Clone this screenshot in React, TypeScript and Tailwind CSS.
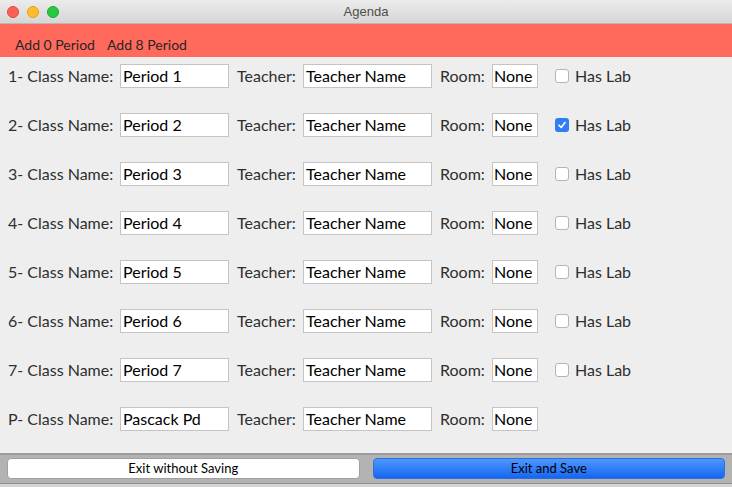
import { useState } from 'react';

type Period = {
  id: string;
  name: string;
  teacher: string;
  room: string;
  hasLab?: boolean;
};

const initialPeriods: Period[] = [
  { id: '1', name: 'Period 1', teacher: 'Teacher Name', room: 'None', hasLab: false },
  { id: '2', name: 'Period 2', teacher: 'Teacher Name', room: 'None', hasLab: true },
  { id: '3', name: 'Period 3', teacher: 'Teacher Name', room: 'None', hasLab: false },
  { id: '4', name: 'Period 4', teacher: 'Teacher Name', room: 'None', hasLab: false },
  { id: '5', name: 'Period 5', teacher: 'Teacher Name', room: 'None', hasLab: false },
  { id: '6', name: 'Period 6', teacher: 'Teacher Name', room: 'None', hasLab: false },
  { id: '7', name: 'Period 7', teacher: 'Teacher Name', room: 'None', hasLab: false },
  { id: 'P', name: 'Pascack Pd', teacher: 'Teacher Name', room: 'None' },
];

export default function App() {
  const [periods, setPeriods] = useState<Period[]>(initialPeriods);

  const update = (i: number, patch: Partial<Period>) => {
    setPeriods((prev) => prev.map((p, idx) => (idx === i ? { ...p, ...patch } : p)));
  };

  return (
    <div className="w-[732px] h-[487px] flex flex-col bg-[#eeeeee] font-['Lato',sans-serif] overflow-hidden">
      {/* Title bar */}
      <div className="relative h-[24px] shrink-0 flex items-center justify-center bg-gradient-to-b from-[#ececec] to-[#d6d6d6] border-b border-[#b8b8b8]">
        <div className="absolute left-[7px] top-[6px] flex gap-[8px]">
          <span className="w-[12px] h-[12px] rounded-full bg-[#fe5f57] border border-[#e2463f]" />
          <span className="w-[12px] h-[12px] rounded-full bg-[#febc2e] border border-[#e1a116]" />
          <span className="w-[12px] h-[12px] rounded-full bg-[#28c840] border border-[#1aab29]" />
        </div>
        <span className="text-[13px] text-[#4d4d4d] font-['Liberation_Sans',sans-serif]">Agenda</span>
      </div>

      {/* Menu bar */}
      <div className="h-[33px] shrink-0 bg-[#ff6a5c] flex items-end pb-[5px] pl-[15px] gap-[12px] text-[14px] text-[#262626]">
        <button className="leading-none">Add 0 Period</button>
        <button className="leading-none">Add 8 Period</button>
      </div>

      {/* Rows */}
      <div className="flex-1 flex flex-col gap-[25px] pt-[7px] pl-[8px] text-[16px] text-[#2e2e2e]">
        {periods.map((p, i) => (
          <div key={p.id} className="h-[24px] flex items-center">
            <label className="w-[112px] shrink-0">{p.id}- Class Name:</label>
            <input
              value={p.name}
              onChange={(e) => update(i, { name: e.target.value })}
              className="w-[109px] h-[24px] px-[2px] bg-white border border-[#c4c4c4] text-black outline-none"
            />
            <label className="w-[66px] shrink-0 ml-[8px]">Teacher:</label>
            <input
              value={p.teacher}
              onChange={(e) => update(i, { teacher: e.target.value })}
              className="w-[129px] h-[24px] px-[2px] bg-white border border-[#c4c4c4] text-black outline-none"
            />
            <label className="w-[52px] shrink-0 ml-[8px]">Room:</label>
            <input
              value={p.room}
              onChange={(e) => update(i, { room: e.target.value })}
              className="w-[46px] h-[24px] px-[1px] bg-white border border-[#c4c4c4] text-black outline-none"
            />
            {p.hasLab !== undefined && (
              <label className="ml-[17px] flex items-center gap-[6px]">
                <span
                  onClick={() => update(i, { hasLab: !p.hasLab })}
                  className={
                    p.hasLab
                      ? 'w-[14px] h-[14px] rounded-[3px] bg-[#2f7ef6] flex items-center justify-center'
                      : 'w-[14px] h-[14px] rounded-[3px] bg-white border border-[#b5b5b5]'
                  }
                >
                  {p.hasLab && (
                    <svg width="10" height="10" viewBox="0 0 10 10">
                      <path d="M2 5.2 L4.2 7.5 L8 2.5" fill="none" stroke="white" strokeWidth="1.6" strokeLinecap="round" strokeLinejoin="round" />
                    </svg>
                  )}
                </span>
                Has Lab
              </label>
            )}
          </div>
        ))}
      </div>

      {/* Bottom bar */}
      <div className="h-[30px] shrink-0 bg-[#b3b3b3] border-t-2 border-[#9c9c9c] flex gap-[13px] px-[7px] pt-[3px] text-[13px] text-black">
        <button className="flex-1 h-[21px] rounded-[4px] bg-white border border-[#a0a0a0] leading-none">Exit without Saving</button>
        <button className="flex-1 h-[21px] rounded-[4px] bg-gradient-to-b from-[#4d97fd] to-[#1466f2] border border-[#2e6fe0] leading-none">Exit and Save</button>
      </div>
      <div className="h-[4px] shrink-0 bg-[#d4d4d4] border-t border-[#8f8f8f]" />
    </div>
  );
}
